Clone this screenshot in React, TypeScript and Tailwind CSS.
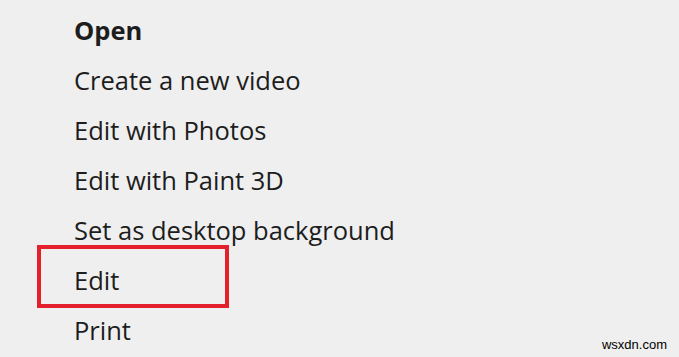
const items = [
  'Open',
  'Create a new video',
  'Edit with Photos',
  'Edit with Paint 3D',
  'Set as desktop background',
  'Edit',
  'Print',
];

export default function App() {
  return (
    <div className="relative h-[357px] w-[679px] overflow-hidden bg-[#efefef] font-['Open_Sans',sans-serif] text-[#1d1d1d]">
      <div className="flex flex-col pt-[6px]">
        {items.map((label, i) => (
          <div key={label} className="relative flex h-[50px] items-center pl-[74px] text-[25.5px] leading-none">
            <span className={i === 0 ? 'font-bold' : 'font-medium'}>{label}</span>
            {label === 'Edit' && (
              <div className="absolute left-[37px] top-[-11px] h-[63px] w-[192px] border-[4px] border-[#e3202b]" />
            )}
          </div>
        ))}
      </div>
      <div className="absolute bottom-[3px] right-[12px] font-['Liberation_Sans',sans-serif] text-[13px] text-black">
        wsxdn.com
      </div>
    </div>
  );
}
